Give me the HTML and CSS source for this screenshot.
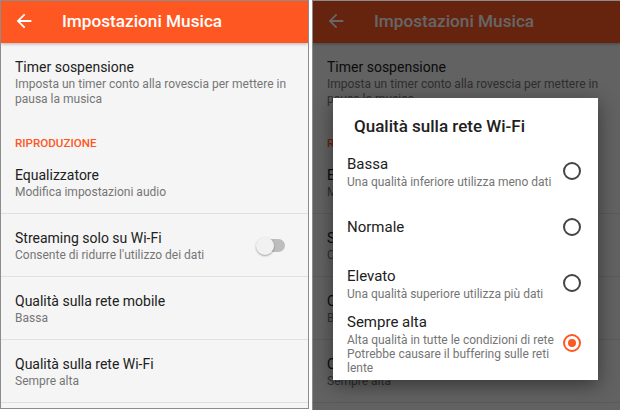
FILE: index.html
```html
<!DOCTYPE html>
<html lang="it">
<head>
<meta charset="utf-8">
<title>Impostazioni Musica</title>
<link rel="stylesheet" href="styles.css">
</head>
<body>
<div class="stage">
  <div class="screen">
    <header class="appbar">
      <svg class="back" viewBox="0 0 24 24"><path d="M20 11H7.83l5.59-5.59L12 4l-8 8 8 8 1.41-1.41L7.83 13H20v-2z" fill="#fff"/></svg>
      <h1 class="appbar-title">Impostazioni Musica</h1>
    </header>
    <div class="list">
      <div class="item plain"><div class="text"><div class="t">Timer sospensione</div><div class="s">Imposta un timer conto alla rovescia per mettere in<br>pausa la musica</div></div></div>
      <div class="cat">RIPRODUZIONE</div>
      <div class="item"><div class="text"><div class="t">Equalizzatore</div><div class="s">Modifica impostazioni audio</div></div></div>
      <div class="item"><div class="text"><div class="t">Streaming solo su Wi-Fi</div><div class="s">Consente di ridurre l'utilizzo dei dati</div></div><div class="switch"><span class="track"></span><span class="thumb"></span></div></div>
      <div class="item"><div class="text"><div class="t">Qualità sulla rete mobile</div><div class="s">Bassa</div></div></div>
      <div class="item"><div class="text"><div class="t">Qualità sulla rete Wi-Fi</div><div class="s">Sempre alta</div></div></div>
    </div>
  </div>
  <div class="screen dim">
    <header class="appbar">
      <svg class="back" viewBox="0 0 24 24"><path d="M20 11H7.83l5.59-5.59L12 4l-8 8 8 8 1.41-1.41L7.83 13H20v-2z" fill="#fff"/></svg>
      <h1 class="appbar-title">Impostazioni Musica</h1>
    </header>
    <div class="list">
      <div class="item plain"><div class="text"><div class="t">Timer sospensione</div><div class="s">Imposta un timer conto alla rovescia per mettere in<br>pausa la musica</div></div></div>
      <div class="cat">RIPRODUZIONE</div>
      <div class="item"><div class="text"><div class="t">Equalizzatore</div><div class="s">Modifica impostazioni audio</div></div></div>
      <div class="item"><div class="text"><div class="t">Streaming solo su Wi-Fi</div><div class="s">Consente di ridurre l'utilizzo dei dati</div></div><div class="switch"><span class="track"></span><span class="thumb"></span></div></div>
      <div class="item"><div class="text"><div class="t">Qualità sulla rete mobile</div><div class="s">Bassa</div></div></div>
      <div class="item"><div class="text"><div class="t">Qualità sulla rete Wi-Fi</div><div class="s">Sempre alta</div></div></div>
    </div>
    <div class="scrim"></div>
    <div class="dialog">
      <h2 class="dialog-title">Qualità sulla rete Wi-Fi</h2>
      <div class="options">
        <div class="opt"><div class="otext"><div class="ot">Bassa</div><div class="os">Una qualità inferiore utilizza meno dati</div></div><span class="radio"></span></div>
        <div class="opt"><div class="otext"><div class="ot">Normale</div></div><span class="radio"></span></div>
        <div class="opt"><div class="otext"><div class="ot">Elevato</div><div class="os">Una qualità superiore utilizza più dati</div></div><span class="radio"></span></div>
        <div class="opt"><div class="otext"><div class="ot">Sempre alta</div><div class="os">Alta qualità in tutte le condizioni di rete<br>Potrebbe causare il buffering sulle reti<br>lente</div></div><span class="radio on"></span></div>
      </div>
    </div>
  </div>
</div>
</body>
</html>
```
FILE: styles.css
```css
* { box-sizing: border-box; margin: 0; padding: 0; }
html, body { width: 620px; height: 410px; overflow: hidden; }
body { background: #fff; font-family: Roboto, "Liberation Sans", sans-serif; color: #212121; }

.stage { display: flex; gap: 3px; height: 410px; }

.screen {
  position: relative;
  width: 309px;
  height: 409px;
  border: 1px solid #8c8c8c;
  background: #f5f5f5;
  overflow: hidden;
  flex: none;
}
.screen.dim { flex: 1; width: auto; height: 410px; border-right: 0; border-bottom: 0; }

.appbar {
  position: relative;
  z-index: 1;
  height: 42px;
  background: #ff5722;
  display: flex;
  align-items: center;
  padding-bottom: 2px;
  box-shadow: 0 1px 3px rgba(0,0,0,.28);
}
.back { width: 22px; height: 22px; margin-left: 12px; flex: none; }
.appbar-title {
  margin-left: 27px;
  font-size: 17.2px;
  font-weight: 500;
  color: #fff;
  line-height: 24px;
}

.list { display: flex; flex-direction: column; }

.item {
  display: flex;
  align-items: center;
  padding: 14px 12px 13px 14px;
  border-bottom: 1px solid #e0e0e0;
}
.item.plain { border-bottom: 0; padding-bottom: 14px; }
.text { flex: 1; min-width: 0; }
.t { font-size: 14px; line-height: 20px; color: #212121; }
.s { font-size: 12px; line-height: 15px; color: #757575; white-space: nowrap; }

.cat {
  padding: 14px 14px 0;
  font-size: 11.6px;
  line-height: 16px;
  font-weight: 500;
  color: #ff5722;
}

.switch { position: relative; width: 30px; height: 18px; margin-right: 10px; flex: none; }
.track {
  position: absolute; left: 4px; top: 2.5px;
  width: 25px; height: 13px; border-radius: 7px;
  background: #bdbdbd;
}
.thumb {
  position: absolute; left: 0; top: 0;
  width: 18px; height: 18px; border-radius: 50%;
  background: #f1f1f1;
  box-shadow: 0 1px 2px rgba(0,0,0,.35);
}

.scrim { position: absolute; inset: 0; z-index: 2; background: rgba(0,0,0,.6); }

.dialog {
  position: absolute;
  z-index: 3;
  left: 20px;
  top: 97px;
  width: 265px;
  background: #fff;
  padding: 16px 0 5px;
  box-shadow: 0 5px 18px rgba(0,0,0,.45);
}
.dialog-title {
  padding-left: 21px;
  font-size: 17px;
  font-weight: 500;
  line-height: 24px;
  color: #212121;
}
.options { margin-top: 5px; display: flex; flex-direction: column; }
.opt {
  min-height: 56px;
  display: flex;
  align-items: center;
  padding: 0 17px 0 14px;
}
.otext { flex: 1; min-width: 0; }
.ot { font-size: 15px; line-height: 22px; color: #212121; }
.os { font-size: 12px; line-height: 14px; color: #757575; white-space: nowrap; }

.radio {
  width: 18px; height: 18px; border-radius: 50%;
  border: 2px solid #444;
  flex: none;
  position: relative;
}
.radio.on { border-color: #ff5722; }
.radio.on::after {
  content: "";
  position: absolute; left: 3px; top: 3px;
  width: 8px; height: 8px; border-radius: 50%;
  background: #ff5722;
}
```
